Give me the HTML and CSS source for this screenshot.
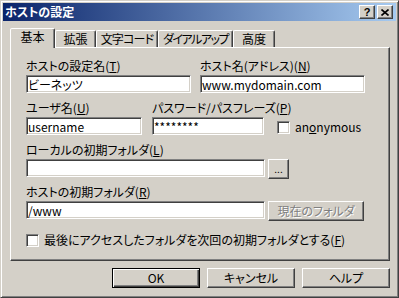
FILE: index.html
```html
<!DOCTYPE html>
<html lang="ja">
<head>
    <meta charset="UTF-8">
    <title>ホストの設定</title>
    <link rel="stylesheet" href="styles.css">
</head>
<body>
    <div class="window">
        <div class="titlebar">
            <span class="title">ホストの設定</span>
            <div class="caption-buttons">
                <span class="cap-btn cap-help">?</span>
                <span class="cap-btn">
                    <svg width="8" height="7" viewBox="0 0 8 7"><path d="M0.5 0.5 L7.5 6.5 M7.5 0.5 L0.5 6.5" stroke="#000" stroke-width="1.6" fill="none"/></svg>
                </span>
            </div>
        </div>

        <div class="tabs">
            <div class="tab active tab-basic">基本</div>
            <div class="tab tab-ext">拡張</div>
            <div class="tab tab-code">文字コード</div>
            <div class="tab tab-dial">ダイアルアップ</div>
            <div class="tab tab-adv">高度</div>
        </div>

        <div class="panel">
            <div class="row row-host">
                <div class="field w-half">
                    <label>ホストの設定名(<u>T</u>)</label>
                    <input class="edit" value="ビーネッツ">
                </div>
                <div class="field w-half">
                    <label>ホスト名(アドレス)(<u>N</u>)</label>
                    <input class="edit" value="www.mydomain.com">
                </div>
            </div>

            <div class="row row-user">
                <div class="field w-user">
                    <label>ユーザ名(<u>U</u>)</label>
                    <input class="edit" value="username">
                </div>
                <div class="field w-pass">
                    <label>パスワード/パスフレーズ(<u>P</u>)</label>
                    <input class="edit" value="********">
                </div>
                <div class="check-line anon">
                    <span class="check"></span>
                    <span>an<u>o</u>nymous</span>
                </div>
            </div>

            <div class="row">
                <div class="field">
                    <label>ローカルの初期フォルダ(<u>L</u>)</label>
                    <div class="edit-line">
                        <input class="edit w-folder" value="">
                        <button class="btn btn-browse">...</button>
                    </div>
                </div>
            </div>

            <div class="row">
                <div class="field">
                    <label>ホストの初期フォルダ(<u>R</u>)</label>
                    <div class="edit-line">
                        <input class="edit w-folder" value="/www">
                        <button class="btn btn-current" disabled>現在のフォルダ</button>
                    </div>
                </div>
            </div>

            <div class="check-line last-folder">
                <span class="check"></span>
                <span>最後にアクセスしたフォルダを次回の初期フォルダとする(<u>F</u>)</span>
            </div>
        </div>

        <div class="buttons">
            <button class="btn btn-dialog btn-default">OK</button>
            <button class="btn btn-dialog">キャンセル</button>
            <button class="btn btn-dialog">ヘルプ</button>
        </div>
    </div>
</body>
</html>
```

FILE: styles.css
```css
body {
    margin: 0;
    font-family: "Noto Sans CJK JP", sans-serif;
    font-size: 12px;
    font-feature-settings: "palt";
    color: #000;
    background: #d4d0c8;
}
.window {
    width: 399px;
    height: 298px;
    box-sizing: border-box;
    background: #d4d0c8;
    border: 1px solid;
    border-color: #d4d0c8 #404040 #404040 #d4d0c8;
    box-shadow: inset 1px 1px #fff, inset -1px -1px #808080;
    padding: 2px;
    display: flex;
    flex-direction: column;
}
.titlebar {
    height: 18px;
    flex-shrink: 0;
    background: linear-gradient(to right, #0a246a, #a6caf0);
    display: flex;
    align-items: center;
    justify-content: space-between;
    padding: 0 3px 0 2px;
}
.title {
    color: #fff;
    font-weight: bold;
    line-height: 18px;
}
.caption-buttons {
    display: flex;
    gap: 2px;
}
.cap-btn {
    width: 16px;
    height: 14px;
    box-sizing: border-box;
    background: #d4d0c8;
    border: 1px solid;
    border-color: #fff #404040 #404040 #fff;
    box-shadow: inset -1px -1px #808080;
    display: flex;
    align-items: center;
    justify-content: center;
}
.cap-help {
    font-family: "Liberation Sans", sans-serif;
    font-weight: bold;
    font-size: 11px;
    line-height: 12px;
}
.tabs {
    display: flex;
    align-items: flex-end;
    height: 19px;
    margin: 7px 0 0 7px;
}
.tab {
    height: 17px;
    box-sizing: border-box;
    border: 1px solid;
    border-bottom: none;
    border-color: #fff #404040 transparent #fff;
    border-radius: 2px 2px 0 0;
    box-shadow: inset -1px 0 #808080;
    padding-top: 1px;
    line-height: 14px;
    text-align: center;
    white-space: nowrap;
    overflow: hidden;
}
.tab.active {
    height: 20px;
    margin-bottom: -1px;
    position: relative;
    z-index: 1;
    background: #d4d0c8;
}
.tab-basic { width: 45px; }
.tab-ext { width: 41px; }
.tab-code { width: 62px; letter-spacing: -0.8px; }
.tab-dial { width: 75px; letter-spacing: -1.5px; }
.tab-adv { width: 42px; }
.panel {
    height: 214px;
    box-sizing: border-box;
    margin: 0 6px 0 7px;
    border: 1px solid;
    border-color: #fff #404040 #404040 #fff;
    box-shadow: inset -1px -1px #808080;
    padding: 11px 0 0 15px;
    display: flex;
    flex-direction: column;
    gap: 8px;
}
.row {
    display: flex;
}
.row-host { gap: 9px; }
.row-user { gap: 10px; }
.field {
    display: flex;
    flex-direction: column;
    gap: 2px;
}
.field label {
    line-height: 14px;
    white-space: nowrap;
}
.w-half { width: 165px; }
.w-user { width: 116px; }
.w-pass { width: 112px; }
.w-folder { width: 239px; }
.edit {
    height: 18px;
    box-sizing: border-box;
    margin: 0;
    padding: 0 1px;
    border: 1px solid;
    border-color: #808080 #fff #fff #808080;
    box-shadow: inset 1px 1px #404040, inset -1px -1px #d4d0c8;
    background: #fff;
    font: inherit;
    color: #000;
    outline: none;
}
.edit-line {
    display: flex;
    align-items: flex-start;
    gap: 3px;
    height: 18px;
}
.check-line {
    display: flex;
    align-items: center;
    gap: 5px;
    line-height: 14px;
    white-space: nowrap;
}
.anon {
    align-self: flex-end;
    height: 18px;
    margin-left: 3px;
    padding-top: 2px;
    box-sizing: border-box;
}
.last-folder {
    margin-top: 6px;
}
.check {
    width: 13px;
    height: 13px;
    box-sizing: border-box;
    background: #fff;
    border: 1px solid;
    border-color: #808080 #fff #fff #808080;
    box-shadow: inset 1px 1px #404040, inset -1px -1px #d4d0c8;
    flex-shrink: 0;
}
.btn {
    box-sizing: border-box;
    margin: 0;
    padding: 0;
    background: #d4d0c8;
    border: 1px solid;
    border-color: #fff #404040 #404040 #fff;
    box-shadow: inset -1px -1px #808080;
    font: inherit;
    color: #000;
    line-height: 14px;
}
.btn-browse {
    width: 21px;
    height: 20px;
    font-size: 10px;
}
.btn-current {
    width: 96px;
    height: 20px;
    color: #808080;
    text-shadow: 1px 1px #fff;
}
.buttons {
    display: flex;
    justify-content: flex-end;
    gap: 7px;
    margin: 7px 6px 0 0;
}
.btn-dialog {
    width: 88px;
    height: 20px;
}
.btn-default {
    border-color: #000;
    box-shadow: inset 1px 1px #fff, inset -1px -1px #404040, inset -2px -2px #808080;
}
```
